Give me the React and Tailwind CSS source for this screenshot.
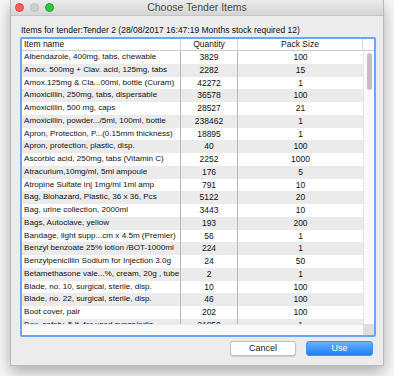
import React from 'react';

const rows = [
  ['Albendazole, 400mg, tabs, chewable', '3829', '100'],
  ['Amox. 500mg + Clav. acid, 125mg, tabs', '2282', '15'],
  ['Amox.125mg & Cla...00ml, bottle (Curam)', '42272', '1'],
  ['Amoxicillin, 250mg, tabs, dispersable', '36578', '100'],
  ['Amoxicillin, 500 mg, caps', '28527', '21'],
  ['Amoxicillin, powder.../5ml, 100ml, bottle', '238462', '1'],
  ['Apron, Protection, P...(0.15mm thickness)', '18895', '1'],
  ['Apron, protection, plastic, disp.', '40', '100'],
  ['Ascorbic acid, 250mg, tabs (Vitamin C)', '2252', '1000'],
  ['Atracurium,10mg/ml, 5ml ampoule', '176', '5'],
  ['Atropine Sulfate inj 1mg/ml 1ml amp', '791', '10'],
  ['Bag, Biohazard, Plastic, 36 x 36, Pcs', '5122', '20'],
  ['Bag, urine collection, 2000ml', '3443', '10'],
  ['Bags, Autoclave, yellow', '193', '200'],
  ['Bandage, light supp...cm x 4.5m (Premier)', '56', '1'],
  ['Benzyl benzoate 25% lotion /BOT-1000ml', '224', '1'],
  ['Benzylpenicillin Sodium for Injection 3.0g', '24', '50'],
  ['Betamethasone vale...%, cream, 20g , tube', '2', '1'],
  ['Blade, no. 10, surgical, sterile, disp.', '10', '100'],
  ['Blade, no. 22, surgical, sterile, disp.', '46', '100'],
  ['Boot cover, pair', '202', '100'],
  ['Box, safety, 5 lt, for used syngs/ndls', '21850', '1'],
];

const App = () => {
  return (
    <div className="w-[394px] h-[376px] bg-[#f7f7f7] pl-[10px] overflow-hidden" style={{ fontFamily: '"Liberation Sans", Arial, sans-serif' }}>
      <div className="w-[374px] h-[366px] bg-[#ececec] flex flex-col border-x border-b border-[#b9b9b9] shadow-[0_6px_14px_rgba(0,0,0,0.3)]">
        {/* Title bar */}
        <div className="h-[16px] shrink-0 grid grid-cols-[1fr_auto_1fr] items-center bg-gradient-to-b from-[#ebebeb] to-[#d5d5d5] border-b border-[#c4c4c4]">
          <div className="flex items-center gap-[6px] pl-[4px]">
            <span className="w-[9px] h-[9px] rounded-full bg-[#fc5f57] border border-[#df4740]" />
            <span className="w-[9px] h-[9px] rounded-full bg-[#cfcfcf] border border-[#bdbdbd]" />
            <span className="w-[9px] h-[9px] rounded-full bg-[#2fc840] border border-[#22a630]" />
          </div>
          <div className="text-[10.5px] text-[#4a4a4a] leading-none">Choose Tender Items</div>
          <div />
        </div>

        {/* Body */}
        <div className="flex flex-col px-[9px]">
          <div className="h-[21px] flex items-end pb-[3px] pl-[1px] text-[8.5px] text-[#111] leading-none">
            Items for tender:Tender 2 (28/08/2017 16:47:19 Months stock required 12)
          </div>

          {/* Table frame */}
          <div className="w-[356px] h-[300px] border-2 border-[#69a7f2] rounded-[2px] bg-white flex flex-col text-[8.5px] text-[#111]">
            <div className="h-[12px] shrink-0 grid grid-cols-[159px_57px_125px_11px] bg-white border-b border-[#cdcdcd] leading-[11px]">
              <div className="pl-[2px] border-r border-[#d8d8d8]">Item name</div>
              <div className="text-center border-r border-[#d8d8d8]">Quantity</div>
              <div className="text-center border-r border-[#d8d8d8]">Pack Size</div>
              <div />
            </div>

            <div className="h-[273px] shrink-0 flex">
              <div className="w-[341px] overflow-hidden">
                {rows.map((r, i) => (
                  <div
                    key={i}
                    className={`h-[12.75px] grid grid-cols-[159px_57px_125px] leading-[12.75px] ${i % 2 === 1 ? 'bg-[#ebebeb]' : 'bg-white'}`}
                  >
                    <div className="pl-[2px] text-[8.1px] whitespace-nowrap overflow-hidden border-r border-[#b8b8b8]">{r[0]}</div>
                    <div className="text-center border-r border-[#b8b8b8]">{r[1]}</div>
                    <div className="text-center">{r[2]}</div>
                  </div>
                ))}
              </div>
              <div className="w-[11px] bg-[#fafafa] border-l border-[#e6e6e6] flex justify-center pt-[2px]">
                <div className="w-[5px] h-[37px] rounded-full bg-[#c1c1c1]" />
              </div>
            </div>

            <div className="flex-1 flex">
              <div className="w-[341px] bg-[#f9f9f9] border-t border-[#ececec]" />
              <div className="w-[11px] bg-[#dedede]" />
            </div>
          </div>

          {/* Buttons */}
          <div className="flex justify-end gap-[10px] mt-[4px] pr-[1px]">
            <button className="w-[66px] h-[15px] rounded-[3px] bg-white border border-[#c3c3c3] text-[9px] text-[#222] leading-none shadow-[0_0.5px_1px_rgba(0,0,0,0.15)]">
              Cancel
            </button>
            <button className="w-[67px] h-[15px] rounded-[3px] bg-gradient-to-b from-[#67b0fb] to-[#1b7ff7] border border-[#3b8ff5] text-[9px] text-white leading-none">
              Use
            </button>
          </div>
        </div>
      </div>
    </div>
  );
};

export default App;
